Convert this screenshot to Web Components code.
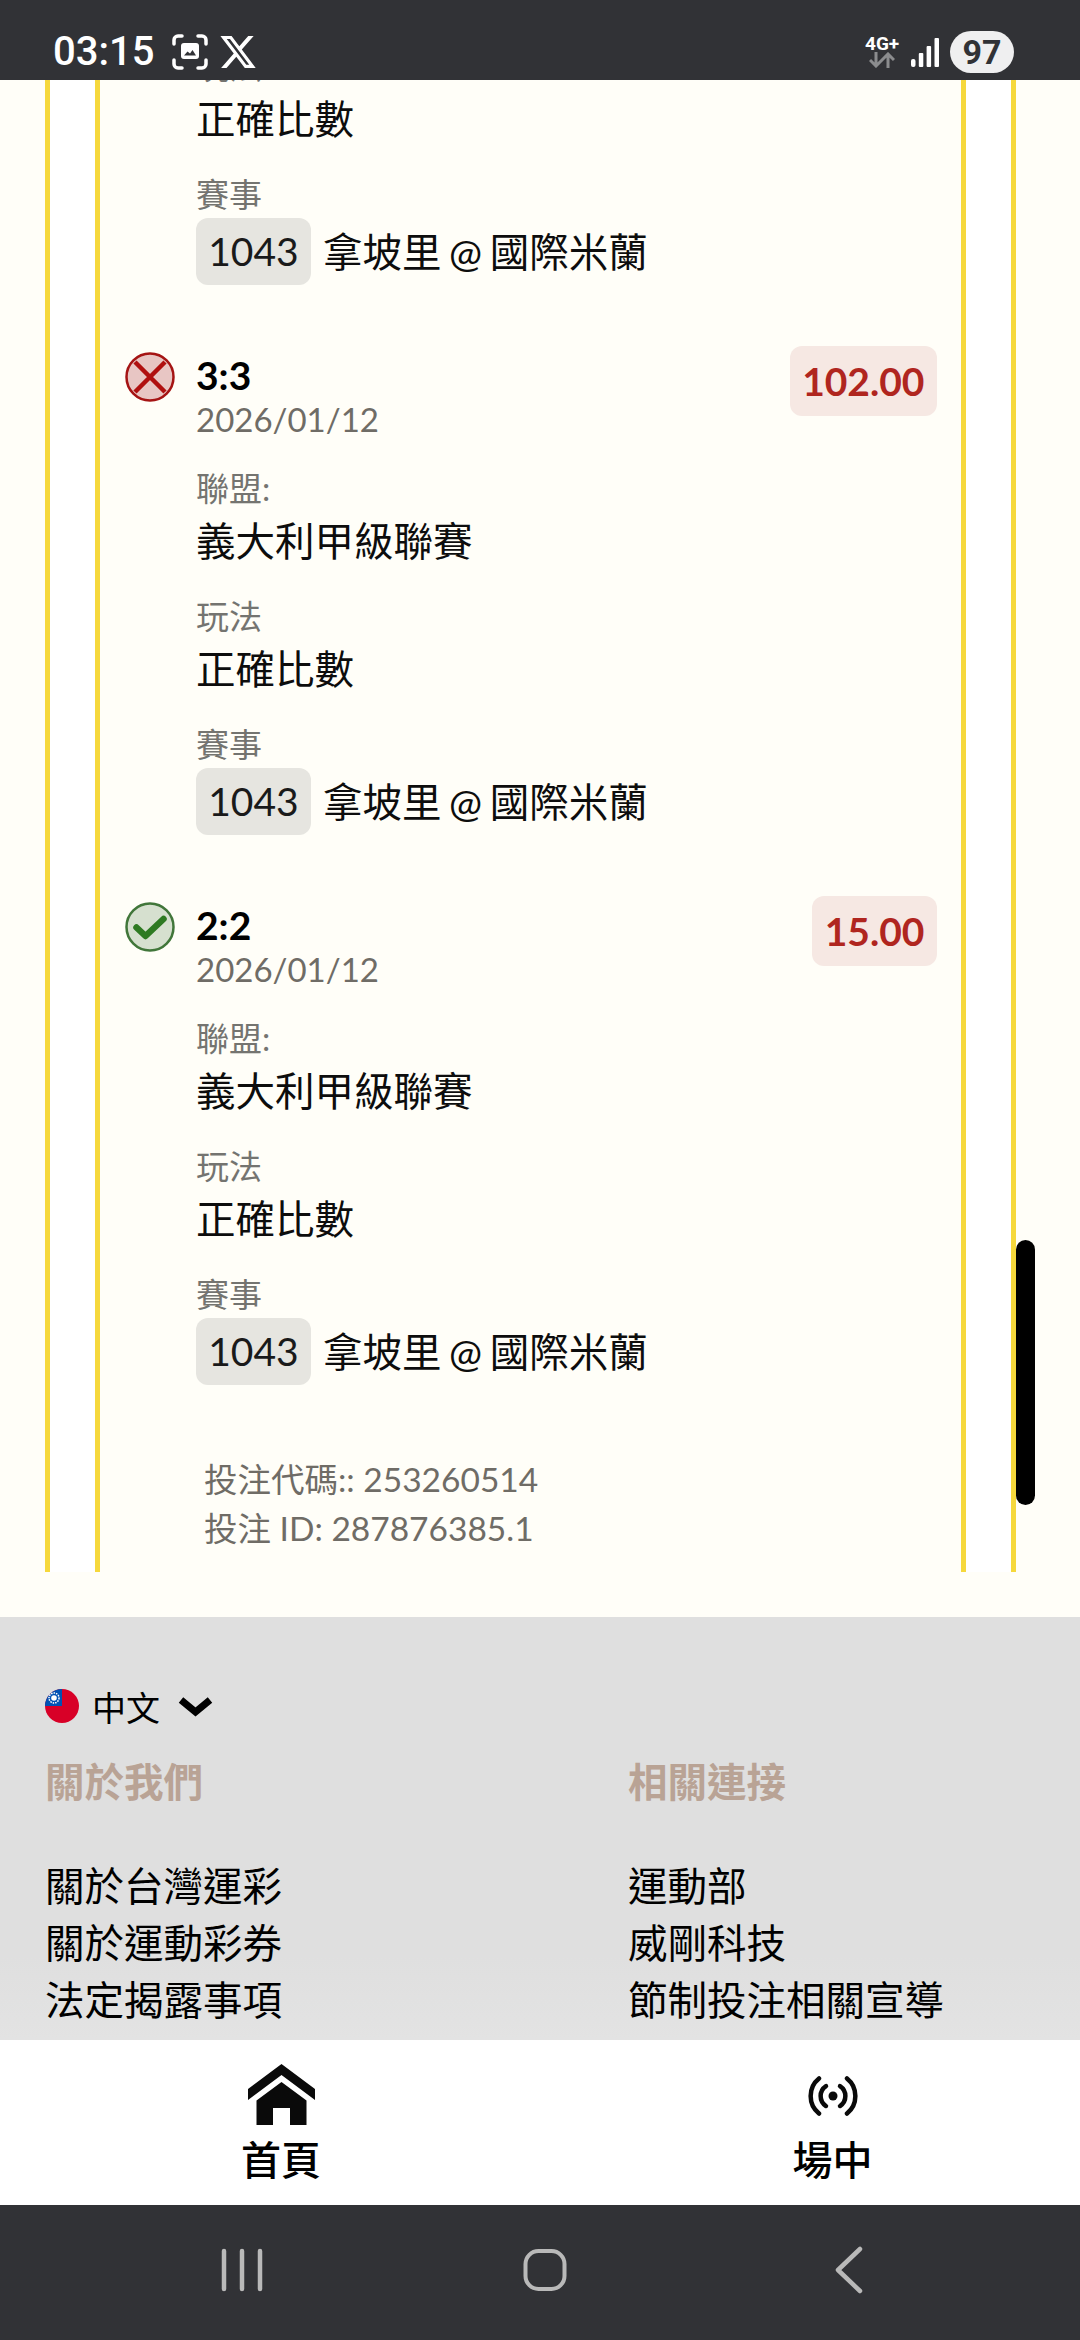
<!DOCTYPE html>
<html lang="zh-Hant">
<head>
<meta charset="utf-8">
<title>投注紀錄</title>
<style>
  html, body { margin: 0; height: 100%; }
  body {
    font-family: Lato, "Noto Sans CJK TC", sans-serif;
    color: #0d0d0d;
    background: #fffef8;
  }
  phone-page { height: 2340px; }
</style>
</head>
<body>
<phone-page>
  <status-strip slot="top"></status-strip>

  <bet-ticket>
    <bet-leg>
      <leg-field label="玩法">正確比數</leg-field>
      <leg-field label="賽事"><match-line code="1043">拿坡里 @ 國際米蘭</match-line></leg-field>
    </bet-leg>
    <bet-leg score="3:3" date="2026/01/12" amount="102.00" result="lost">
      <leg-field label="聯盟:">義大利甲級聯賽</leg-field>
      <leg-field label="玩法">正確比數</leg-field>
      <leg-field label="賽事"><match-line code="1043">拿坡里 @ 國際米蘭</match-line></leg-field>
    </bet-leg>
    <bet-leg score="2:2" date="2026/01/12" amount="15.00" result="won">
      <leg-field label="聯盟:">義大利甲級聯賽</leg-field>
      <leg-field label="玩法">正確比數</leg-field>
      <leg-field label="賽事"><match-line code="1043">拿坡里 @ 國際米蘭</match-line></leg-field>
    </bet-leg>
    <div slot="meta">投注代碼:: 253260514</div>
    <div slot="meta">投注 ID: 287876385.1</div>
  </bet-ticket>

  <site-footer>
    <link-column heading="關於我們">
      <div>關於台灣運彩</div>
      <div>關於運動彩券</div>
      <div>法定揭露事項</div>
    </link-column>
    <link-column heading="相關連接">
      <div>運動部</div>
      <div>威剛科技</div>
      <div>節制投注相關宣導</div>
    </link-column>
  </site-footer>

  <tab-bar slot="bottom"></tab-bar>
  <system-nav slot="bottom"></system-nav>
</phone-page>

<script>
const pageTemplate = document.createElement("template");
pageTemplate.innerHTML = `
  <style>
    :host { display: flex; flex-direction: column; position: relative; overflow: hidden; }
    .scroller { flex: 1; min-height: 0; overflow: hidden; }
    .thumb {
      position: absolute;
      left: 1016px;
      top: 1240px;
      width: 19px;
      height: 265px;
      border-radius: 10px;
      background: #000;
    }
  </style>
  <slot name="top"></slot>
  <div class="scroller"><slot></slot></div>
  <slot name="bottom"></slot>
  <div class="thumb"></div>
`;

class PhonePage extends HTMLElement {
  constructor() {
    super();
    this.attachShadow({ mode: "open" });
    this.shadowRoot.appendChild(pageTemplate.content.cloneNode(true));
  }
}

const statusTemplate = document.createElement("template");
statusTemplate.innerHTML = `
  <style>
    :host {
      display: flex;
      align-items: center;
      height: 80px;
      box-sizing: border-box;
      padding: 24px 66px 0 53px;
      background: #313236;
      color: #fff;
      font-family: Roboto, sans-serif;
    }
    .time { font-size: 40px; font-weight: 500; line-height: 52px; width: 119px; }
    svg { display: block; flex: none; }
    .x { margin-left: 12px; }
    .spacer { flex: 1; }
    .net { width: 33px; margin-right: 13px; }
    .net b { display: block; font-size: 19px; line-height: 16px; font-weight: 700; white-space: nowrap; }
    .net svg { margin: 0 auto; }
    .battery {
      width: 64px;
      height: 42px;
      margin-left: 11px;
      border-radius: 21px;
      background: #efeff0;
      color: #313236;
      font-size: 34px;
      font-weight: 700;
      line-height: 42px;
      text-align: center;
    }
  </style>
  <span class="time">03:15</span>
  <svg width="36" height="36" viewBox="0 0 36 36" fill="none" stroke="#fff" stroke-width="3.500" stroke-linecap="round">
    <path d="M2 10V6a4 4 0 0 1 4-4h4M26 2h4a4 4 0 0 1 4 4v4M34 26v4a4 4 0 0 1-4 4h-4M10 34H6a4 4 0 0 1-4-4v-4"/>
    <rect x="9" y="9" width="18" height="16" rx="3" fill="#fff" stroke="none"/>
    <path d="M12 21.500l3.500-4 2.500 2 2.500-3.500 3.500 5.500z" fill="#313236" stroke="none"/>
  </svg>
  <svg class="x" width="36" height="36" viewBox="1 2 22 20" fill="#fff">
    <path d="M18.244 2.25h3.308l-7.227 8.26 8.502 11.24H16.17l-5.214-6.817L4.99 21.75H1.68l7.73-8.835L1.254 2.25H8.08l4.713 6.231zm-1.161 17.52h1.833L7.084 4.126H5.117z"/>
  </svg>
  <span class="spacer"></span>
  <div class="net">
    <b>4G+</b>
    <svg width="26" height="16" viewBox="0 0 26 16" fill="none" stroke="#8b8c8e" stroke-width="3">
      <path d="M7 0v14M1 8l6 6 6-6M19 16V2M13 8l6-6 6 6"/>
    </svg>
  </div>
  <svg width="28" height="29" viewBox="0 0 28 29" fill="#fff">
    <rect x="0" y="21" width="4.500" height="8" rx="2"/>
    <rect x="7.800" y="15" width="4.500" height="14" rx="1"/>
    <rect x="15.600" y="8" width="4.500" height="21" rx="1"/>
    <rect x="23.500" y="0" width="4.500" height="29" rx="1"/>
  </svg>
  <div class="battery">97</div>
`;

class StatusStrip extends HTMLElement {
  constructor() {
    super();
    this.attachShadow({ mode: "open" });
    this.shadowRoot.appendChild(statusTemplate.content.cloneNode(true));
  }
}

const ticketTemplate = document.createElement("template");
ticketTemplate.innerHTML = `
  <style>
    :host { display: block; padding-bottom: 45px; background: #fffef8; }
    .outer {
      margin: -36px 64px 0 45px;
      padding: 0 45px;
      background: #fff;
      border: solid #f6d83c;
      border-width: 0 5px;
    }
    .inner {
      padding: 0 24px 19px 25px;
      background: #fffef8;
      border: solid #f6d83c;
      border-width: 0 5px;
    }
    .legs { display: flex; flex-direction: column; gap: 61px; }
    .meta {
      margin: 70px 0 0 79px;
      color: #6f6c66;
      font-size: 33.500px;
      line-height: 49px;
    }
  </style>
  <div class="outer"><div class="inner">
    <div class="legs"><slot></slot></div>
    <div class="meta"><slot name="meta"></slot></div>
  </div></div>
`;

class BetTicket extends HTMLElement {
  constructor() {
    super();
    this.attachShadow({ mode: "open" });
    this.shadowRoot.appendChild(ticketTemplate.content.cloneNode(true));
  }
}

const RESULT_ICONS = {
  lost: `<svg width="50" height="50" viewBox="0 0 50 50">
      <circle cx="25" cy="25" r="23.500" fill="#e8c6c4" stroke="#a51414" stroke-width="2.500"/>
      <path d="M10 10l30 30M40 10L10 40" stroke="#b01010" stroke-width="4.500"/>
    </svg>`,
  won: `<svg width="50" height="50" viewBox="0 0 50 50">
      <circle cx="25" cy="25" r="23.500" fill="#d6e0cf" stroke="#41763a" stroke-width="2.500"/>
      <path d="M11.500 25.500l9 8.500 18-17" fill="none" stroke="#2e7a22" stroke-width="6.500" stroke-linecap="round" stroke-linejoin="round"/>
    </svg>`
};

class BetLeg extends HTMLElement {
  constructor() {
    super();
    this.attachShadow({ mode: "open" });
  }

  connectedCallback() {
    const score = this.getAttribute("score");
    const head = score ? `
      <div class="head">
        <div class="mark">${RESULT_ICONS[this.getAttribute("result")]}</div>
        <div class="title">
          <div class="score">${score}</div>
          <div class="date">${this.getAttribute("date")}</div>
        </div>
        <div class="amount">${this.getAttribute("amount")}</div>
      </div>` : "";

    this.shadowRoot.innerHTML = `
      <style>
        :host { display: block; }
        .head { display: flex; align-items: flex-start; margin-bottom: 32px; }
        .mark { width: 71px; margin-top: 6px; flex: none; }
        .mark svg { display: block; }
        .title { flex: 1; }
        .score { font-size: 39px; font-weight: 700; line-height: 58px; color: #000; }
        .date { font-size: 33px; line-height: 30px; color: #6f6c66; }
        .amount {
          padding: 0 12.500px;
          height: 70px;
          line-height: 70px;
          border-radius: 12px;
          background: #f6e8e3;
          color: #b0261f;
          font-size: 39px;
          font-weight: 700;
        }
        .fields { display: flex; flex-direction: column; gap: 22px; padding-left: 71px; }
      </style>
      ${head}
      <div class="fields"><slot></slot></div>
    `;
  }
}

class LegField extends HTMLElement {
  constructor() {
    super();
    this.attachShadow({ mode: "open" });
  }

  connectedCallback() {
    this.shadowRoot.innerHTML = `
      <style>
        :host { display: block; }
        .label { font-size: 33px; line-height: 44px; color: #747470; }
        .value { font-size: 39.500px; line-height: 62px; color: #0d0d0d; }
      </style>
      <div class="label">${this.getAttribute("label")}</div>
      <div class="value"><slot></slot></div>
    `;
  }
}

class MatchLine extends HTMLElement {
  constructor() {
    super();
    this.attachShadow({ mode: "open" });
  }

  connectedCallback() {
    this.shadowRoot.innerHTML = `
      <style>
        :host { display: flex; align-items: center; gap: 12px; margin-top: 2px; word-spacing: -2.500px; }
        .code {
          width: 115px;
          height: 67px;
          border-radius: 12px;
          background: #e6e5e0;
          line-height: 67px;
          text-align: center;
          font-size: 39px;
          color: #1a1a1a;
        }
      </style>
      <span class="code">${this.getAttribute("code")}</span>
      <span><slot></slot></span>
    `;
  }
}

const footerTemplate = document.createElement("template");
footerTemplate.innerHTML = `
  <style>
    :host {
      display: block;
      padding: 64px 0 0 45px;
      height: 423px;
      box-sizing: border-box;
      background: linear-gradient(#dfdfdf 80%, #e3e3e3);
      overflow: hidden;
    }
    .lang { display: flex; align-items: center; height: 50px; font-size: 34px; color: #000; }
    .lang svg { display: block; flex: none; }
    .lang span { margin: 0 18px 0 13px; }
    .cols { display: grid; grid-template-columns: 583px 1fr; margin-top: 25px; }
  </style>
  <div class="lang">
    <svg width="34" height="34" viewBox="0 0 34 34">
      <circle cx="17" cy="17" r="17" fill="#d80027"/>
      <path d="M0 17A17 17 0 0 1 17 0v17z" fill="#0052b4"/>
      <circle cx="9" cy="9" r="5" fill="none" stroke="#fff" stroke-width="1.500" stroke-dasharray="1.500 1"/>
      <circle cx="9" cy="9" r="2.800" fill="#fff"/>
    </svg>
    <span>中文</span>
    <svg width="35" height="21" viewBox="0 0 35 21" fill="none" stroke="#000" stroke-width="7">
      <path d="M3 4l14.500 12L32 4"/>
    </svg>
  </div>
  <div class="cols"><slot></slot></div>
`;

class SiteFooter extends HTMLElement {
  constructor() {
    super();
    this.attachShadow({ mode: "open" });
    this.shadowRoot.appendChild(footerTemplate.content.cloneNode(true));
  }
}

class LinkColumn extends HTMLElement {
  constructor() {
    super();
    this.attachShadow({ mode: "open" });
  }

  connectedCallback() {
    this.shadowRoot.innerHTML = `
      <style>
        :host { display: block; }
        h3 { margin: 0 0 49px; font-size: 39.500px; font-weight: 700; line-height: 52px; color: #b9a395; }
        .links { font-size: 39.500px; line-height: 57px; color: #000; }
      </style>
      <h3>${this.getAttribute("heading")}</h3>
      <div class="links"><slot></slot></div>
    `;
  }
}

const tabsTemplate = document.createElement("template");
tabsTemplate.innerHTML = `
  <style>
    :host {
      display: grid;
      grid-template-columns: 562px 1fr;
      height: 165px;
      background: #fff;
      color: #000;
      font-size: 40px;
      font-weight: 500;
    }
    .tab { display: flex; flex-direction: column; align-items: center; }
    .tab:last-child { padding-left: 23px; }
    .icon { height: 91px; display: flex; align-items: flex-start; }
    svg { display: block; }
    .home svg { margin-top: 24px; }
    .live svg { margin-top: 36px; }
    .label { line-height: 58px; }
  </style>
  <div class="tab home">
    <div class="icon">
      <svg width="67" height="61" viewBox="0 0 67 61" fill="#0a0a0a">
        <path d="M33.500 0L67 25v11L33.500 11 0 36V25z"/>
        <path d="M33.500 18L58.500 36.500V61H42V44H25V61H8.500V36.500z"/>
      </svg>
    </div>
    <div class="label">首頁</div>
  </div>
  <div class="tab live">
    <div class="icon">
      <svg width="50" height="40" viewBox="0 0 50 40" fill="none" stroke="#0a0a0a" stroke-width="4.500" stroke-linecap="round">
        <path d="M11 2.500A22.500 22.500 0 0 0 11 37.500M39 2.500A22.500 22.500 0 0 1 39 37.500"/>
        <path d="M18 10A12 12 0 0 0 18 30M32 10A12 12 0 0 1 32 30"/>
        <circle cx="25" cy="20" r="4.500" fill="#0a0a0a" stroke="none"/>
      </svg>
    </div>
    <div class="label">場中</div>
  </div>
`;

class TabBar extends HTMLElement {
  constructor() {
    super();
    this.attachShadow({ mode: "open" });
    this.shadowRoot.appendChild(tabsTemplate.content.cloneNode(true));
  }
}

const navTemplate = document.createElement("template");
navTemplate.innerHTML = `
  <style>
    :host {
      display: flex;
      align-items: flex-start;
      height: 135px;
      padding: 43px 0 0 220px;
      box-sizing: border-box;
      background: #313236;
    }
    svg { display: block; flex: none; }
    .home { margin-left: 259px; }
    .back { margin-left: 268px; margin-top: -2px; }
  </style>
  <svg width="44" height="44" viewBox="0 0 44 44" fill="none" stroke="#b9b9b9" stroke-width="4.500" stroke-linecap="round">
    <path d="M4 3v38M22 3v38M40 3v38"/>
  </svg>
  <svg class="home" width="44" height="44" viewBox="0 0 44 44" fill="none" stroke="#b9b9b9" stroke-width="4">
    <rect x="2.500" y="3" width="39" height="38" rx="13"/>
  </svg>
  <svg class="back" width="28" height="48" viewBox="0 0 28 48" fill="none" stroke="#b9b9b9" stroke-width="4.500" stroke-linecap="round" stroke-linejoin="round">
    <path d="M25 3L3 24l22 21"/>
  </svg>
`;

class SystemNav extends HTMLElement {
  constructor() {
    super();
    this.attachShadow({ mode: "open" });
    this.shadowRoot.appendChild(navTemplate.content.cloneNode(true));
  }
}

customElements.define("phone-page", PhonePage);
customElements.define("status-strip", StatusStrip);
customElements.define("bet-ticket", BetTicket);
customElements.define("bet-leg", BetLeg);
customElements.define("leg-field", LegField);
customElements.define("match-line", MatchLine);
customElements.define("site-footer", SiteFooter);
customElements.define("link-column", LinkColumn);
customElements.define("tab-bar", TabBar);
customElements.define("system-nav", SystemNav);
</script>
</body>
</html>
